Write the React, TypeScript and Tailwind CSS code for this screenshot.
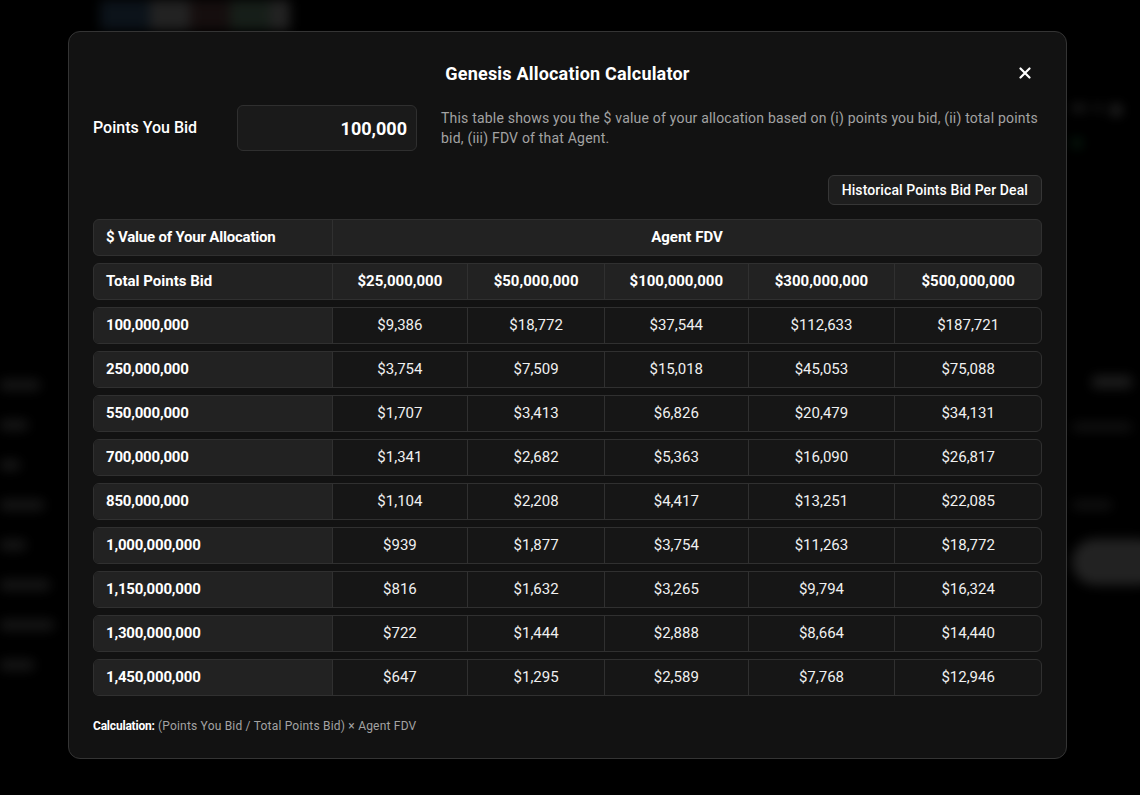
import React from "react";

const fdvs = ["$25,000,000", "$50,000,000", "$100,000,000", "$300,000,000", "$500,000,000"];
const colW = ["w-[136px]", "w-[137px]", "w-[144px]", "w-[147px]", "w-[147px]"];

const rows: [string, string[]][] = [
  ["100,000,000", ["$9,386", "$18,772", "$37,544", "$112,633", "$187,721"]],
  ["250,000,000", ["$3,754", "$7,509", "$15,018", "$45,053", "$75,088"]],
  ["550,000,000", ["$1,707", "$3,413", "$6,826", "$20,479", "$34,131"]],
  ["700,000,000", ["$1,341", "$2,682", "$5,363", "$16,090", "$26,817"]],
  ["850,000,000", ["$1,104", "$2,208", "$4,417", "$13,251", "$22,085"]],
  ["1,000,000,000", ["$939", "$1,877", "$3,754", "$11,263", "$18,772"]],
  ["1,150,000,000", ["$816", "$1,632", "$3,265", "$9,794", "$16,324"]],
  ["1,300,000,000", ["$722", "$1,444", "$2,888", "$8,664", "$14,440"]],
  ["1,450,000,000", ["$647", "$1,295", "$2,589", "$7,768", "$12,946"]],
];

function Background() {
  return (
    <div className="flex h-full w-full blur-[6px] opacity-60">
      <div className="flex w-[80px] flex-col gap-[30px] pt-[380px]">
        {[40, 28, 20, 44, 26, 50, 54, 34].map((w, i) => (
          <div key={i} className="h-[10px] rounded bg-[#2a2a2a]" style={{ width: w }} />
        ))}
      </div>
      <div className="flex flex-1 flex-col">
        <div className="flex h-[30px] pl-[20px]">
          <div className="h-[30px] w-[50px] bg-[#14202c]" />
          <div className="h-[30px] w-[40px] bg-[#3a3a3a]" />
          <div className="h-[30px] w-[40px] bg-[#241818]" />
          <div className="h-[30px] w-[40px] bg-[#26332a]" />
          <div className="h-[30px] w-[20px] bg-[#3a3a3a]" />
        </div>
      </div>
      <div className="flex w-[80px] flex-col items-start pt-[104px] pl-[12px]">
        <div className="flex gap-2">
          <div className="h-[8px] w-[14px] rounded bg-[#333]" />
          <div className="h-[8px] w-[8px] rounded bg-[#333]" />
          <div className="h-[12px] w-[12px] rounded-full bg-[#444]" />
        </div>
        <div className="mt-[22px] h-[10px] w-[10px] rounded-full bg-[#0f3a1f]" />
        <div className="mt-[228px] ml-[20px] h-[12px] w-[40px] rounded bg-[#333]" />
        <div className="mt-[35px] h-[8px] w-[60px] rounded bg-[#222]" />
        <div className="mt-[70px] h-[8px] w-[40px] rounded bg-[#222]" />
        <div className="mt-[30px] h-[46px] w-[90px] rounded-full bg-[#3a3a3a]" />
      </div>
    </div>
  );
}

function X() {
  return (
    <svg width="12" height="12" viewBox="0 0 12 12" fill="none">
      <path d="M1.5 1.5L10.5 10.5M10.5 1.5L1.5 10.5" stroke="white" strokeWidth="2.2" strokeLinecap="round" />
    </svg>
  );
}

export default function App() {
  return (
    <div className="relative h-[795px] w-[1140px] overflow-hidden bg-black font-['Roboto',sans-serif] text-white">
      <Background />
      <div className="absolute left-[68px] top-[31px] w-[999px] rounded-xl border border-[#343434] bg-[#121212] px-[24px] pt-[24px] pb-[24px]">
        <button className="absolute right-[35px] top-[35px] flex h-[12px] w-[12px] items-center justify-center">
          <X />
        </button>
        <h2 className="flex h-[34px] items-center justify-center text-[18px] font-bold tracking-[0.2px]">
          Genesis Allocation Calculator
        </h2>
        <div className="mt-[15px] flex items-center">
          <div className="w-[144px] text-[16px] font-medium text-white">Points You Bid</div>
          <div className="flex h-[46px] w-[180px] items-center justify-end rounded-md border border-[#2f2f2f] bg-[#1a1a1a] px-[9px] text-[18px] font-bold">
            100,000
          </div>
          <p className="ml-[24px] flex-1 text-[14px] leading-[20px] tracking-[0.2px] text-[#a3a3a3]">
            This table shows you the $ value of your allocation based on (i) points you bid, (ii) total points bid, (iii) FDV of that Agent.
          </p>
        </div>
        <div className="mt-[24px] flex justify-end">
          <button className="h-[30px] rounded-md border border-[#363636] bg-[#1e1e1e] px-[13px] text-[14px] font-medium tracking-[0.1px] text-white">
            Historical Points Bid Per Deal
          </button>
        </div>
        <div className="mt-[14px] flex flex-col gap-[7px]">
          <div className="flex h-[37px] overflow-hidden rounded-md border border-[#303030] bg-[#222]">
            <div className="flex w-[238px] items-center px-[12px] text-[15px] font-bold tracking-[-0.2px]">
              $ Value of Your Allocation
            </div>
            <div className="flex flex-1 items-center justify-center border-l border-[#303030] text-[15px] font-bold">
              Agent FDV
            </div>
          </div>
          <div className="flex h-[37px] overflow-hidden rounded-md border border-[#303030] bg-[#222]">
            <div className="flex w-[238px] items-center px-[12px] text-[15px] font-bold">
              Total Points Bid
            </div>
            {fdvs.map((f, i) => (
              <div
                key={f}
                className={`${colW[i]} flex items-center justify-center border-l border-[#303030] text-[15px] font-bold`}
              >
                {f}
              </div>
            ))}
          </div>
          {rows.map(([label, vals]) => (
            <div key={label} className="flex h-[37px] overflow-hidden rounded-md border border-[#303030] bg-[#161616]">
              <div className="flex w-[238px] items-center bg-[#222] px-[12px] text-[15px] font-bold tracking-[-0.2px]">
                {label}
              </div>
              {vals.map((v, i) => (
                <div
                  key={i}
                  className={`${colW[i]} flex items-center justify-center border-l border-[#303030] text-[15px] text-[#f0f0f0]`}
                >
                  {v}
                </div>
              ))}
            </div>
          ))}
        </div>
        <div className="mt-[22px] text-[12px] leading-[16px] tracking-[0.2px] text-[#a3a3a3]">
          <span className="font-bold tracking-[-0.2px] text-white">Calculation:</span> (Points You Bid / Total Points Bid) × Agent FDV
        </div>
      </div>
    </div>
  );
}
